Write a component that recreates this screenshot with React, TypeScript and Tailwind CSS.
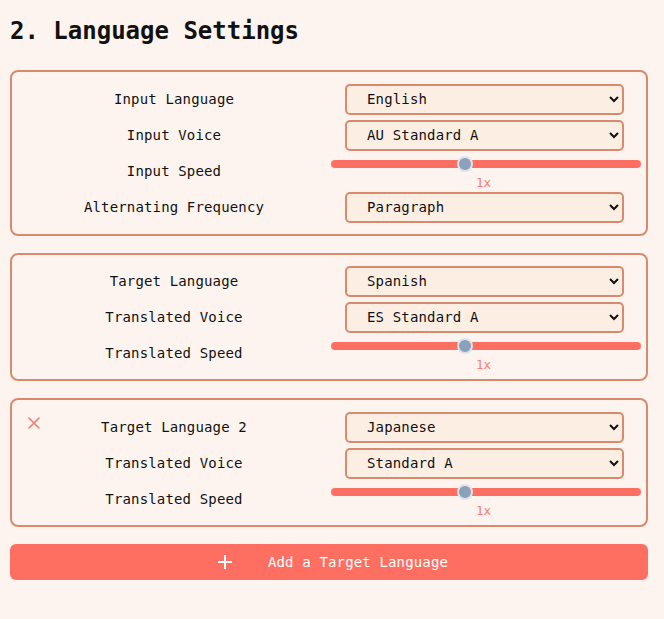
import React from "react";

const mono = { fontFamily: "'DejaVu Sans Mono', 'Liberation Mono', monospace" };

function Select({ value }: { value: string }) {
  return (
    <select
      defaultValue={value}
      className="ml-[14px] h-[31px] w-[279px] rounded-[5px] border-2 border-[#d98a6c] bg-[#fdeee4] pl-[16px] pr-[8px] text-[14px] tracking-[0.15px] text-[#111] outline-none"
    >
      <option>{value}</option>
    </select>
  );
}

function Slider() {
  return (
    <div className="flex flex-col items-center pt-[3px]">
      <div className="relative flex h-[16px] w-[310px] items-center">
        <div className="h-[8px] w-full rounded-full bg-[#ff6f61]" />
        <div className="absolute left-[126px] top-0 h-[16px] w-[16px] rounded-full border-2 border-[#dde2ea] bg-[#8aa0bb]" />
      </div>
      <div className="mt-[4px] pr-[5px] text-[12.5px] leading-[14px] text-[#ff7b6e]">1x</div>
    </div>
  );
}

type Row = { label: string; kind: "select" | "slider"; value?: string };

function Card({ rows, removable, pad }: { rows: Row[]; removable?: boolean; pad: string }) {
  return (
    <div className={`relative rounded-[8px] border-2 border-[#d98a6c] px-[5px] ${pad}`}>
      {removable && (
        <svg
          className="absolute left-[16px] top-[17px]"
          width="12"
          height="12"
          viewBox="0 0 12 12"
          stroke="#f47a70"
          strokeWidth="1.6"
          strokeLinecap="round"
        >
          <path d="M1 1L11 11M11 1L1 11" />
        </svg>
      )}
      <div className="grid grid-cols-[314px_310px]">
        {rows.map((r) => (
          <React.Fragment key={r.label}>
            <div className="flex h-[36px] items-center justify-center text-[14px] tracking-[0.15px] text-[#111]">
              {r.label}
            </div>
            <div className="h-[36px]">
              {r.kind === "select" ? (
                <div className="flex h-full items-center">
                  <Select value={r.value!} />
                </div>
              ) : (
                <Slider />
              )}
            </div>
          </React.Fragment>
        ))}
      </div>
    </div>
  );
}

export default function App() {
  return (
    <div className="min-h-[619px] w-[664px] bg-[#fdf4ef]" style={mono}>
      <div className="ml-[10px] w-[638px] pt-[15px]">
        <h2 className="h-[32px] text-[24px] font-bold leading-[32px] text-[#111]">
          2. Language Settings
        </h2>
        <div className="mt-[23px] flex flex-col gap-[17px]">
          <Card
            pad="py-[9px]"
            rows={[
              { label: "Input Language", kind: "select", value: "English" },
              { label: "Input Voice", kind: "select", value: "AU Standard A" },
              { label: "Input Speed", kind: "slider" },
              { label: "Alternating Frequency", kind: "select", value: "Paragraph" },
            ]}
          />
          <Card
            pad="py-[8px]"
            rows={[
              { label: "Target Language", kind: "select", value: "Spanish" },
              { label: "Translated Voice", kind: "select", value: "ES Standard A" },
              { label: "Translated Speed", kind: "slider" },
            ]}
          />
          <Card
            pad="pt-[9px] pb-[8px]"
            removable
            rows={[
              { label: "Target Language 2", kind: "select", value: "Japanese" },
              { label: "Translated Voice", kind: "select", value: "Standard A" },
              { label: "Translated Speed", kind: "slider" },
            ]}
          />
          <button className="flex h-[36px] w-full items-center justify-center gap-[36px] rounded-[6px] bg-[#ff6f61] pl-[8px] text-[14px] tracking-[0.15px] text-white">
            <svg width="14" height="14" viewBox="0 0 14 14" stroke="white" strokeWidth="2">
              <path d="M7 0V14M0 7H14" />
            </svg>
            <span>Add a Target Language</span>
          </button>
        </div>
      </div>
    </div>
  );
}
